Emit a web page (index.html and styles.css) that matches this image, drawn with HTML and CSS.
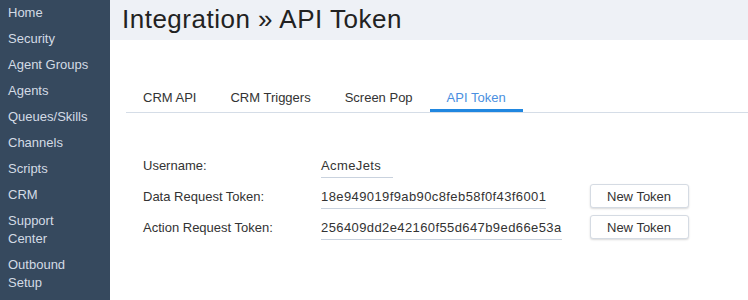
FILE: index.html
```html
<!DOCTYPE html>
<html lang="en">
<head>
    <meta charset="UTF-8">
    <meta name="viewport" content="width=device-width, initial-scale=1.0">
    <title>Integration - API Token</title>
    <link rel="stylesheet" href="styles.css">
</head>
<body>
    <nav class="sidebar">
        <a href="#">Home</a>
        <a href="#">Security</a>
        <a href="#">Agent Groups</a>
        <a href="#">Agents</a>
        <a href="#">Queues/Skills</a>
        <a href="#">Channels</a>
        <a href="#">Scripts</a>
        <a href="#">CRM</a>
        <a href="#">Support Center</a>
        <a href="#">Outbound Setup</a>
    </nav>
    <main class="main">
        <header class="page-header">
            <h1>Integration &raquo; API Token</h1>
        </header>
        <div class="content">
            <ul class="tabs">
                <li class="tab">CRM API</li>
                <li class="tab">CRM Triggers</li>
                <li class="tab">Screen Pop</li>
                <li class="tab active">API Token</li>
            </ul>
            <div class="token-form">
                <div class="label">Username:</div>
                <div class="value"><span>AcmeJets</span></div>
                <div></div>

                <div class="label">Data Request Token:</div>
                <div class="value"><span>18e949019f9ab90c8feb58f0f43f6001</span></div>
                <button class="btn">New Token</button>

                <div class="label">Action Request Token:</div>
                <div class="value"><span>256409dd2e42160f55d647b9ed66e53a</span></div>
                <button class="btn">New Token</button>
            </div>
        </div>
    </main>
</body>
</html>
```

FILE: styles.css
```css
body, html {
    margin: 0;
    padding: 0;
    height: 100%;
    overflow: hidden;
}
body {
    display: flex;
    font-family: "Liberation Sans", Arial, sans-serif;
    color: #333;
}
.sidebar {
    width: 110px;
    flex-shrink: 0;
    background-color: #36495e;
    display: flex;
    flex-direction: column;
    gap: 8px;
    padding: 4px 14px 0 8px;
    box-sizing: border-box;
}
.sidebar a {
    color: #d3dbe5;
    text-decoration: none;
    font-size: 13px;
    line-height: 18px;
}
.main {
    flex: 1;
    display: flex;
    flex-direction: column;
}
.page-header {
    height: 40px;
    background-color: #eef1f6;
    padding-left: 12px;
}
.page-header h1 {
    margin: 0;
    font-size: 26px;
    letter-spacing: 0.5px;
    font-weight: normal;
    line-height: 38px;
    color: #222;
}
.content {
    padding: 44px 0 0 16px;
}
.tabs {
    list-style: none;
    margin: 0;
    padding: 0;
    display: flex;
    border-bottom: 1px solid #d5dde7;
}
.tab {
    padding: 6px 17px 4px;
    font-size: 13px;
    line-height: 15px;
    color: #333;
    border-bottom: 3px solid transparent;
}
.tab.active {
    color: #4a8fe0;
    border-bottom-color: #2087e0;
}
.token-form {
    display: grid;
    grid-template-columns: 178px auto auto;
    justify-content: start;
    align-items: start;
    row-gap: 6px;
    margin: 40px 0 0 17px;
    font-size: 13px;
}
.label {
    padding-top: 4px;
    line-height: 18px;
}
.value {
    display: flex;
}
.value span {
    min-width: 72px;
    border-bottom: 1px solid #c9d2de;
    padding: 4px 0 2px;
    line-height: 18px;
    letter-spacing: 0.4px;
}
.btn {
    width: 99px;
    height: 24px;
    margin-left: 28px;
    padding: 0;
    background-color: #fff;
    border: 1px solid #d5dbe3;
    border-radius: 3px;
    box-shadow: 0 1px 2px rgba(0, 0, 0, 0.15);
    font-family: inherit;
    font-size: 13px;
    color: #333;
}
```
